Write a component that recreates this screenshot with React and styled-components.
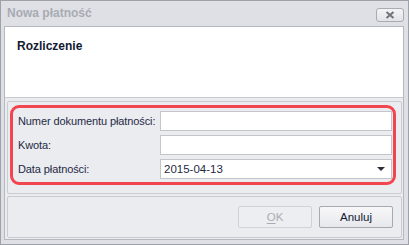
import React from "react";
import styled, { createGlobalStyle } from "styled-components";

const GlobalStyle = createGlobalStyle`
  html, body {
    margin: 0;
    padding: 0;
    background: #ffffff;
  }
  body {
    font-family: "Liberation Sans", Arial, sans-serif;
  }
`;

const Window = styled.div`
  box-sizing: border-box;
  width: 409px;
  height: 245px;
  border: 1px solid #9fa1a9;
  background: #dfe0e5;
  display: flex;
  flex-direction: column;
  padding: 0 4px 4px 3px;
`;

const TitleBar = styled.div`
  height: 25px;
  display: flex;
  align-items: center;
  justify-content: space-between;
  padding-left: 3px;
`;

const Title = styled.span`
  font-size: 12px;
  font-weight: bold;
  color: #a8abb3;
  margin-top: -1px;
`;

const CloseButton = styled.button`
  box-sizing: border-box;
  width: 28px;
  height: 14px;
  margin-top: 3px;
  padding: 0;
  border: 1px solid #a9abb2;
  border-radius: 3px;
  background: linear-gradient(#f4f4f6, #e2e3e7);
  display: flex;
  align-items: center;
  justify-content: center;
`;

const Client = styled.div`
  flex: 1;
  display: flex;
  flex-direction: column;
  border: 1px solid #b6b8bf;
  background: #ebecf0;
`;

const Header = styled.div`
  box-sizing: border-box;
  height: 71px;
  background: #ffffff;
  border-bottom: 1px solid #c8cad0;
  padding: 12px 12px;
  font-size: 12px;
  font-weight: bold;
  color: #111a33;
`;

const Body = styled.div`
  flex: 1;
  display: flex;
  flex-direction: column;
  gap: 2px;
  padding: 3px 1px 1px 2px;
`;

const Group = styled.div`
  border: 1px solid #c9cbd1;
  border-radius: 2px;
  padding: 3px 5px 8px 2px;
`;

const Highlight = styled.div`
  border: 3px solid #f1464f;
  border-radius: 9px;
  padding: 3px 1px 3px 5px;
  display: grid;
  grid-template-columns: 142px 1fr;
  grid-auto-rows: 20px;
  row-gap: 4px;
  align-items: center;
`;

const Label = styled.label`
  font-size: 11px;
  color: #1f2a44;
  white-space: nowrap;
  letter-spacing: -0.1px;
`;

const Field = styled.div`
  box-sizing: border-box;
  height: 20px;
  border: 1px solid #c3c5cb;
  background: #ffffff;
  display: flex;
  align-items: center;
  justify-content: space-between;
  padding: 0 6px 0 3px;
  font-size: 11.5px;
  color: #1f2a44;
`;

const Arrow = styled.span`
  width: 0;
  height: 0;
  border-left: 4px solid transparent;
  border-right: 4px solid transparent;
  border-top: 4px solid #2a2f3a;
`;

const Footer = styled.div`
  flex: 1;
  display: flex;
  justify-content: flex-end;
  align-items: flex-start;
  gap: 7px;
  border: 1px solid #c9cbd1;
  border-radius: 2px;
  padding: 9px 8px 0 0;
`;

const Button = styled.button`
  box-sizing: border-box;
  width: 74px;
  height: 22px;
  padding: 0;
  border: 1px solid ${(p) => (p.disabled ? "#d0d2d7" : "#a7a9b0")};
  border-radius: 2px;
  background: ${(p) =>
    p.disabled ? "#eceef1" : "linear-gradient(#f7f7f9, #e7e8eb)"};
  font-family: "Liberation Sans", Arial, sans-serif;
  font-size: 11.5px;
  color: ${(p) => (p.disabled ? "#a9acb3" : "#111a33")};

  u {
    text-underline-offset: 2px;
  }
`;

export default function App() {
  return (
    <>
      <GlobalStyle />
      <Window>
        <TitleBar>
          <Title>Nowa płatność</Title>
          <CloseButton aria-label="Zamknij">
            <svg width="10" height="8" viewBox="0 0 10 8">
              <path
                d="M1.5 1 L8.5 7 M8.5 1 L1.5 7"
                stroke="#6f7279"
                strokeWidth="2"
                fill="none"
              />
            </svg>
          </CloseButton>
        </TitleBar>
        <Client>
          <Header>Rozliczenie</Header>
          <Body>
            <Group>
              <Highlight>
                <Label>Numer dokumentu płatności:</Label>
                <Field />
                <Label>Kwota:</Label>
                <Field />
                <Label>Data płatności:</Label>
                <Field>
                  2015-04-13
                  <Arrow />
                </Field>
              </Highlight>
            </Group>
            <Footer>
              <Button disabled>
                <u>O</u>K
              </Button>
              <Button>Anuluj</Button>
            </Footer>
          </Body>
        </Client>
      </Window>
    </>
  );
}
